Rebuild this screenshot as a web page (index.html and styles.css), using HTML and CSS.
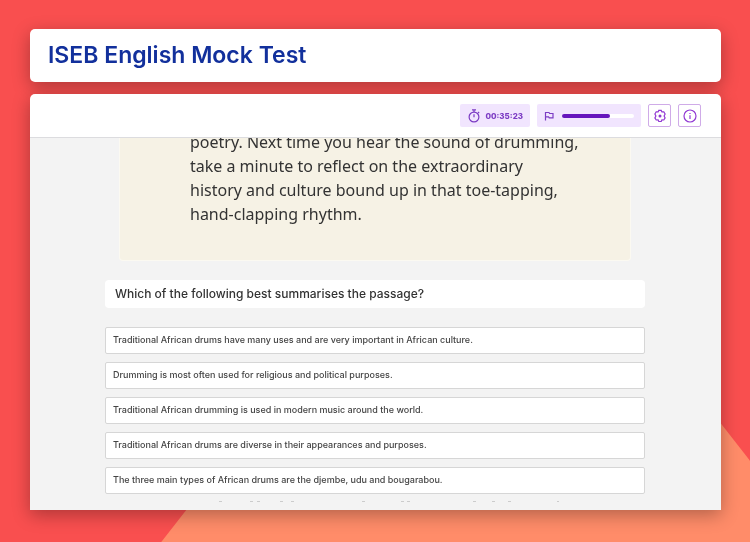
FILE: index.html
```html
<!DOCTYPE html>
<html lang="en">
<head>
<meta charset="UTF-8">
<meta name="viewport" content="width=device-width, initial-scale=1.0">
<title>ISEB English Mock Test</title>
<link rel="stylesheet" href="styles.css">
</head>
<body>
<div class="backdrop"></div>

<div class="page">
    <header class="title-card">
        <h1>ISEB English Mock Test</h1>
    </header>

    <main class="test">
        <div class="toolbar">
            <div class="timer">
                <svg class="icon" viewBox="0 0 14 14" width="14" height="14">
                    <circle cx="7" cy="8" r="4.9"/>
                    <path d="M5 .8h4M7 5.2V8.2M11 3l1.2 1.2M7 1v2"/>
                </svg>
                <span>00:35:23</span>
            </div>
            <div class="progress">
                <svg class="icon flag" viewBox="0 0 10 10" width="10" height="10">
                    <path d="M1.5 9.5V1.5H5l.6 1H9v4.3H5.2l-.6-1H1.5"/>
                </svg>
                <div class="track"><div class="bar" style="width: 66%"></div></div>
            </div>
            <button class="tool" type="button" aria-label="Settings">
                <svg class="icon" viewBox="0 0 14 14" width="14" height="14">
                    <path d="M5.8 1.4h2.4l.7 1.5 1.9-.1 1.3 2.2-1 1.9 1 2-1.3 2.1-1.9-.1-.7 1.6H5.8l-.7-1.6-1.9.1L1.9 8.9l1-2-1-1.9 1.3-2.2 1.9.1z"/>
                    <circle class="dot" cx="7" cy="7" r="1.5"/>
                </svg>
            </button>
            <button class="tool" type="button" aria-label="Information">
                <svg class="icon" viewBox="0 0 14 14" width="14" height="14">
                    <circle cx="7" cy="7" r="6"/>
                    <path d="M7 6.2V10M7 4v1"/>
                </svg>
            </button>
        </div>

        <div class="content">
            <div class="passage">
                <p>poetry. Next time you hear the sound of drumming,<br>
                take a minute to reflect on the extraordinary<br>
                history and culture bound up in that toe-tapping,<br>
                hand-clapping rhythm.</p>
            </div>
            <h2 class="question">Which of the following best summarises the passage?</h2>
            <div class="answers">
                <button class="answer" type="button">Traditional African drums have many uses and are very important in African culture.</button>
                <button class="answer" type="button">Drumming is most often used for religious and political purposes.</button>
                <button class="answer" type="button">Traditional African drumming is used in modern music around the world.</button>
                <button class="answer" type="button">Traditional African drums are diverse in their appearances and purposes.</button>
                <button class="answer" type="button">The three main types of African drums are the djembe, udu and bougarabou.</button>
            </div>
            <svg class="next-line" viewBox="0 0 540 1" height="1" aria-hidden="true">
                <path d="M114 .5h3M145 .5h3M152 .5h3M175 .5h3M186 .5h3M257 .5h3M296 .5h3M302 .5h3M368 .5h3M387 .5h3M403 .5h3M452 .5h2"/>
            </svg>
        </div>
    </main>
</div>
</body>
</html>
```
FILE: styles.css
```css
* {
    box-sizing: border-box;
}

body {
    margin: 0;
    background-color: #f94f4f;
    font-family: Inter, "Liberation Sans", sans-serif;
    color: #333;
}

.backdrop {
    position: fixed;
    top: 0;
    left: 0;
    width: 100%;
    height: 100%;
    background-color: #ff8c69;
    clip-path: polygon(65% 23%, 100% 85%, 100% 100%, 21.5% 100%);
}

.page {
    position: relative;
    display: flex;
    flex-direction: column;
    gap: 12px;
    height: 100vh;
    padding: 29px 29px 32px 30px;
}

.title-card,
.test {
    background-color: #fff;
    border-radius: 5px;
    box-shadow: 0 5px 18px rgba(0, 0, 0, 0.3);
}

.title-card {
    padding: 11px 18px;
}

h1 {
    margin: 0;
    color: #12309c;
    font-size: 23px;
    line-height: 31px;
    font-weight: 600;
}

.test {
    flex: 1;
    min-height: 0;
    display: flex;
    flex-direction: column;
    overflow: hidden;
    border-radius: 5px 5px 0 0;
}

.toolbar {
    display: flex;
    flex-shrink: 0;
    justify-content: flex-end;
    align-items: center;
    gap: 7px;
    height: 44px;
    padding: 0 20px;
    border-bottom: 1px solid #dcdcdf;
    color: #7c3cc4;
}

.icon {
    display: block;
    fill: none;
    stroke: currentColor;
    stroke-width: 1.2;
}

.timer,
.progress {
    display: flex;
    align-items: center;
    height: 23px;
    padding: 0 7px;
    border-radius: 2px;
    background-color: #f1e5fe;
}

.timer {
    gap: 4px;
    font-size: 8px;
    font-weight: 800;
}

.progress {
    gap: 8px;
}

.track {
    width: 72px;
    height: 4px;
    border-radius: 2px;
    background-color: #fff;
}

.bar {
    height: 100%;
    border-radius: 2px;
    background-color: #6615bd;
}

.tool {
    display: flex;
    align-items: center;
    justify-content: center;
    width: 23px;
    height: 23px;
    padding: 0;
    border: 1px solid #cfabe8;
    border-radius: 2px;
    background-color: #fff;
    color: #9138d3;
}

.tool .dot {
    fill: currentColor;
    stroke: none;
}

.content {
    flex: 1;
    min-height: 0;
    overflow: hidden;
    padding: 0 76px 0 75px;
    background-color: #f3f3f3;
}

.passage {
    margin: 0 14px;
    padding: 0 40px 34px 70px;
    border: 1px solid #fbf9f1;
    border-top: 0;
    border-radius: 0 0 4px 4px;
    background-color: #f6f2e5;
}

.passage p {
    margin: -8px 0 0;
    font-family: "Noto Sans", sans-serif;
    font-size: 16px;
    line-height: 24px;
}

.question {
    margin: 19px 0;
    padding: 0 10px;
    border-radius: 4px;
    background-color: #fff;
    font-size: 12px;
    line-height: 28px;
    font-weight: 500;
}

.answers {
    display: flex;
    flex-direction: column;
    gap: 8px;
}

.answer {
    height: 27px;
    padding: 0 7px 2px;
    border: 1px solid #d6d6d6;
    border-radius: 2px;
    background-color: #fff;
    color: #444;
    font-family: inherit;
    font-size: 9px;
    font-weight: 500;
    text-align: left;
}

/* top edge of the line scrolled below the answers */
.next-line {
    display: block;
    width: 100%;
    margin-top: 7px;
    stroke: #ccc;
}
```
